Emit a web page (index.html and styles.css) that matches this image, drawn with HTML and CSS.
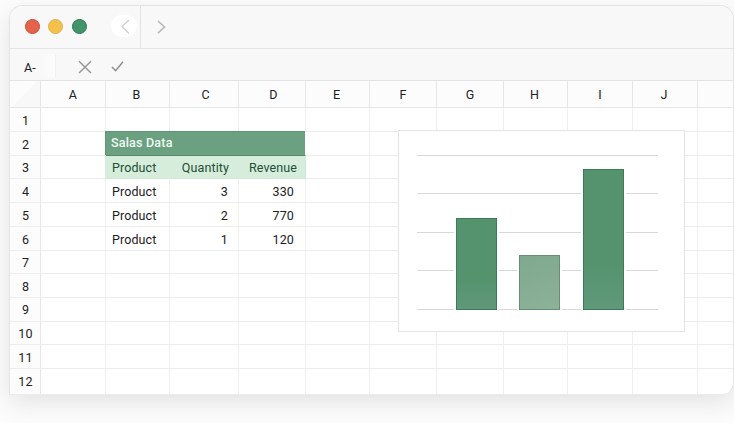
FILE: index.html
```html
<!DOCTYPE html>
<html lang="en">
<head>
<meta charset="utf-8">
<title>Spreadsheet</title>
<link rel="stylesheet" href="styles.css">
</head>
<body>
<main class="window">
  <header class="titlebar">
    <div class="lights"><i class="light red"></i><i class="light yellow"></i><i class="light green"></i></div>
    <div class="nav">
      <span class="back"><svg width="26" height="22" viewBox="0 0 26 22"><path d="M18 5 L11 11.5 L18 18.5"/></svg></span>
      <span class="forward"><svg width="20" height="22" viewBox="0 0 20 22"><path d="M7 5 L13.5 11 L7 17.2"/></svg></span>
    </div>
  </header>
  <div class="formula">
    <span class="cellname">A-</span>
    <svg class="cancel" width="14" height="14" viewBox="0 0 14 14"><path d="M1 1.3 L13 13 M13 1.3 L1 13"/></svg>
    <svg class="accept" width="14" height="12" viewBox="0 0 14 12"><path d="M1 6 L4.6 9.8 L12 .8"/></svg>
  </div>
  <section class="sheet">
    <table>
      <colgroup><col class="w31"><col class="w65"><col class="w64"><col class="w69"><col class="w67"><col class="w64"><col class="w67"><col class="w67"><col class="w64"><col class="w65"><col class="w65"><col></colgroup>
      <thead><tr><th class="corner"></th><th>A</th><th class="back-nudge">B</th><th class="nudge">C</th><th class="nudge">D</th><th class="back-nudge">E</th><th>F</th><th>G</th><th class="back-nudge">H</th><th>I</th><th class="back-nudge">J</th><th></th></tr></thead>
      <tbody>
      <tr><th>1</th><td></td><td></td><td></td><td></td><td></td><td></td><td></td><td></td><td></td><td></td><td></td></tr>
      <tr><th>2</th><td></td><td class="title" colspan="3">Salas Data</td><td></td><td></td><td></td><td></td><td></td><td></td><td></td></tr>
      <tr class="short"><th>3</th><td></td><td class="label">Product</td><td class="label num">Quantity</td><td class="label num">Revenue</td><td></td><td></td><td></td><td></td><td></td><td></td><td></td></tr>
      <tr><th>4</th><td></td><td>Product</td><td class="num">3</td><td class="num rev">330</td><td></td><td></td><td></td><td></td><td></td><td></td><td></td></tr>
      <tr><th>5</th><td></td><td>Product</td><td class="num">2</td><td class="num rev">770</td><td></td><td></td><td></td><td></td><td></td><td></td><td></td></tr>
      <tr><th>6</th><td></td><td>Product</td><td class="num">1</td><td class="num rev">120</td><td></td><td></td><td></td><td></td><td></td><td></td><td></td></tr>
      <tr class="short"><th>7</th><td></td><td></td><td></td><td></td><td></td><td></td><td></td><td></td><td></td><td></td><td></td></tr>
      <tr><th>8</th><td></td><td></td><td></td><td></td><td></td><td></td><td></td><td></td><td></td><td></td><td></td></tr>
      <tr><th class="raised">9</th><td></td><td></td><td></td><td></td><td></td><td></td><td></td><td></td><td></td><td></td><td></td></tr>
      <tr class="short"><th>10</th><td></td><td></td><td></td><td></td><td></td><td></td><td></td><td></td><td></td><td></td><td></td></tr>
      <tr><th>11</th><td></td><td></td><td></td><td></td><td></td><td></td><td></td><td></td><td></td><td></td><td></td></tr>
      <tr class="last"><th class="raised">12</th><td></td><td></td><td></td><td></td><td></td><td></td><td></td><td></td><td></td><td></td><td></td></tr>
      </tbody>
    </table>
    <div class="chart">
      <div class="plot">
        <div class="bar mid"></div>
        <div class="bar low"></div>
        <div class="bar high"></div>
      </div>
    </div>
  </section>
</main>
</body>
</html>
```
FILE: styles.css
```css
* { box-sizing: border-box; }
body {
  margin: 0;
  height: 423px;
  padding: 5px 0 0 9px;
  overflow: hidden;
  background: #fcfcfc;
  font: 12.5px/14px Roboto, "Liberation Sans", sans-serif;
  letter-spacing: .1px;
  color: #1b211e;
}
.window {
  width: 725px;
  height: 390px;
  border: 1px solid #e4e4e4;
  border-bottom-color: #ececec;
  border-radius: 14px 14px 12px 0;
  background: #fff;
  overflow: hidden;
  box-shadow: 0 8px 24px rgba(0, 0, 0, .1);
}
.titlebar {
  height: 43px;
  display: flex;
  background: #f8f8f8;
  border-bottom: 1px solid #e4e4e4;
}
.lights { display: flex; gap: 8.5px; padding: 13px 0 0 14.5px; }
.light { width: 15px; height: 15px; border-radius: 50%; border: 1px solid; }
.red { background: #e6634b; border-color: #c84d38; }
.yellow { background: #f3c14b; border-color: #dfb04a; }
.green { background: #43946a; border-color: #2d7652; }
.nav { display: flex; margin-left: 24.5px; }
.nav svg, .formula svg { display: block; fill: none; stroke-width: 1.4; }
.back { width: 30px; height: 42px; padding-top: 9px; border-right: 1px solid #e2e2e2; }
.back svg { background: #fff; border-radius: 11px; stroke: #d0d0d0; }
.forward { padding: 10px 0 0 10px; }
.forward svg { stroke: #bababa; stroke-width: 1.7; }
.formula {
  height: 32px;
  display: flex;
  align-items: center;
  padding: 5px 0 0 14px;
  background: #f8f8f8;
  border-bottom: 1px solid #e3e3e3;
}
.cellname { width: 32px; height: 24px; margin: -2px 22px 0 0; padding-top: 7px; background: linear-gradient(90deg, #f8f8f8 50%, #fbfbfb); border-right: 1px solid #f2f2f2; }
.cancel { stroke: #949494; }
.accept { stroke: #8b8b8b; margin-left: 19px; }
.sheet { position: relative; }
table {
  width: 723px;
  table-layout: fixed;
  border-collapse: separate;
  border-spacing: 0;
}
.w31 { width: 31px; }
.w64 { width: 64px; }
.w65 { width: 65px; }
.w67 { width: 67px; }
.w69 { width: 69px; }
tr { height: 24px; }
thead tr { height: 27px; }
.short { height: 23px; }
.last { height: 25px; }
th, td {
  padding: 0;
  border-right: 1px solid #efefef;
  border-bottom: 1px solid #ececec;
  line-height: 14px;
  white-space: nowrap;
}
th { font-weight: 400; text-align: center; background: #fcfcfc; }
thead th { border-color: #e6e6e6; padding-top: 2px; }
thead .nudge { padding-left: 3px; }
thead .back-nudge { padding-right: 2px; }
tbody th { padding: 2px 0 0 1px; border-right-color: #e6e6e6; }
tbody .raised { padding-top: 0; }
thead .corner { background: linear-gradient(135deg, #fcfcfc 50%, #f8f8f8 50%); }
th:last-child, td:last-child { border-right: 0; }
.last > * { border-bottom: 0; }
td { padding: 2px 0 0 6px; }
td.num { padding: 2px 10px 0 0; text-align: right; }
td.rev { padding-right: 11px; }
td.title {
  padding: 0 0 1px 5px;
  background: #6ba181 padding-box;
  box-shadow: -1px -1px #5f9675;
  border-color: #568a6b;
  border-right-color: #fff;
  color: #f0faf3;
  font-weight: 500;
  letter-spacing: .2px;
}
td.label {
  background: #d5edda;
  box-shadow: -1px 0 #d5edda;
  border-color: #cfe8d5;
  color: #234e38;
}
td.label.num { padding-right: 8px; }
td.label:nth-child(4) { padding-right: 9px; }
.chart {
  position: absolute;
  left: 388px;
  top: 49px;
  width: 287px;
  height: 202px;
  padding: 24px 26px 22px 18px;
  background: #fff;
  border: 1px solid #e4e4e4;
}
.plot {
  height: 155px;
  display: flex;
  align-items: flex-end;
  gap: 22px;
  padding-left: 39px;
  background: repeating-linear-gradient(#d8d8d8 0 1px, transparent 1px 38.5px);
}
.bar {
  width: 41px;
  background: linear-gradient(#54936e 65%, #60987a);
  border: 1px solid #3c7b58;
  box-shadow: -2px 0 #fff, 2px 0 #fff;
}
.mid { height: 92px; }
.low { height: 55px; background: linear-gradient(160deg, #7fa98e, #8db199); border-color: #648f74; }
.high { height: 141px; margin-left: 1px; }
```
